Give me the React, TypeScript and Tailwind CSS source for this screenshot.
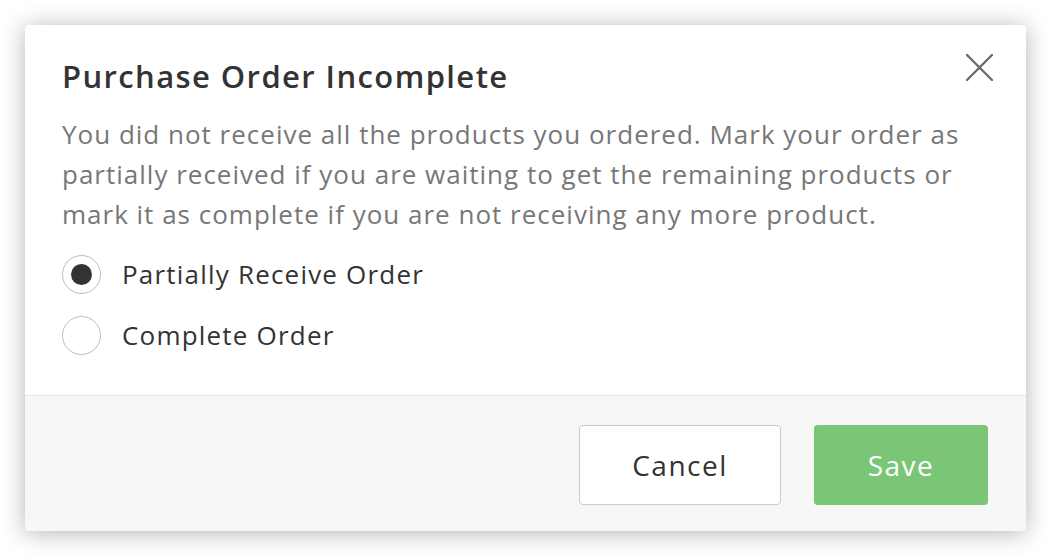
import React from "react";

const font = { fontFamily: "'Open Sans', Lato, sans-serif" };

const Radio = ({ checked, label }: { checked: boolean; label: string }) => (
  <label className="flex items-center h-[40px] gap-[21px] cursor-pointer">
    <span className="w-[39px] h-[39px] rounded-full border border-[#bdbdbd] bg-white flex items-center justify-center">
      {checked && <span className="w-[21px] h-[21px] rounded-full bg-[#333333]" />}
    </span>
    <span className="text-[26px] leading-[40px] tracking-[1.2px] text-[#333333]">{label}</span>
  </label>
);

export default function App() {
  return (
    <div className="w-[1051px] h-[556px] bg-white p-[25px]" style={font}>
      <div className="relative w-[1001px] h-[506px] bg-white rounded-[4px] shadow-[0_2px_24px_rgba(0,0,0,0.3)] flex flex-col overflow-hidden">
        {/* close */}
        <button className="absolute top-[29px] right-[33px] w-[27px] h-[27px]">
          <svg viewBox="0 0 27 27" width="27" height="27">
            <path d="M1 1 L26 26 M26 1 L1 26" stroke="#6b6b6b" strokeWidth="2.4" strokeLinecap="round" />
          </svg>
        </button>

        <div className="px-[37px] pt-[31px] pb-[40px] flex-1">
          <h2 className="text-[31px] leading-[40px] font-semibold tracking-[1.4px] text-[#333333]">Purchase Order Incomplete</h2>
          <p className="mt-[18px] text-[26px] leading-[40px] tracking-[1px] text-[#777777] whitespace-nowrap">
            You did not receive all the products you ordered. Mark your order as
            <br />
            partially received if you are waiting to get the remaining products or
            <br />
            mark it as complete if you are not receiving any more product.
          </p>
          <div className="mt-[20px] flex flex-col gap-[21px]">
            <Radio checked label="Partially Receive Order" />
            <Radio checked={false} label="Complete Order" />
          </div>
        </div>

        <div className="h-[136px] border-t border-[#e6e6e6] bg-[#f7f7f7] flex justify-end items-start pt-[29px] pr-[38px] gap-[33px]">
          <button className="w-[202px] h-[80px] rounded-[4px] border border-[#cccccc] bg-white text-[28px] tracking-[1.5px] text-[#333333]">
            Cancel
          </button>
          <button className="w-[174px] h-[80px] rounded-[4px] bg-[#7bc576] text-[28px] tracking-[1.5px] text-white">
            Save
          </button>
        </div>
      </div>
    </div>
  );
}
